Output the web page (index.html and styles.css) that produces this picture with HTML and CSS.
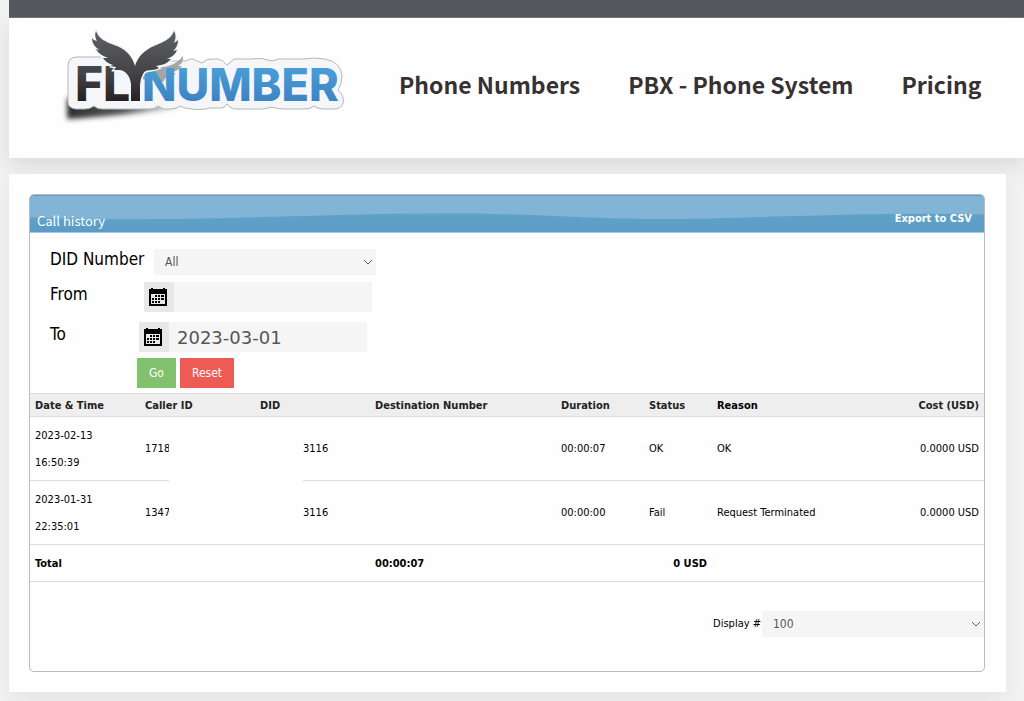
FILE: index.html
```html
<!DOCTYPE html>
<html lang="en">
<head>
    <meta charset="UTF-8">
    <meta name="viewport" content="width=device-width, initial-scale=1.0">
    <title>Call history - FlyNumber</title>
    <link rel="stylesheet" href="styles.css">
</head>
<body>
    <div class="top-bar"></div>

    <header class="header">
        <a class="logo" href="#" aria-label="FlyNumber">
            <svg width="290" height="105" viewBox="60 25 290 105">
                <defs>
                    <linearGradient id="dark" x1="0" y1="30" x2="0" y2="102" gradientUnits="userSpaceOnUse">
                        <stop offset="0" stop-color="#606164"/>
                        <stop offset="0.6" stop-color="#434345"/>
                        <stop offset="1" stop-color="#252022"/>
                    </linearGradient>
                    <linearGradient id="blue" x1="0" y1="66" x2="0" y2="102" gradientUnits="userSpaceOnUse">
                        <stop offset="0" stop-color="#4a9fd8"/>
                        <stop offset="1" stop-color="#3d82c2"/>
                    </linearGradient>
                    <linearGradient id="fade" x1="66" y1="0" x2="185" y2="0" gradientUnits="userSpaceOnUse">
                        <stop offset="0" stop-color="#2c302e"/>
                        <stop offset="0.5" stop-color="#2c302e" stop-opacity="0.8"/>
                        <stop offset="1" stop-color="#2c302e" stop-opacity="0"/>
                    </linearGradient>
                    <filter id="soft" x="-10%" y="-30%" width="120%" height="180%">
                        <feGaussianBlur stdDeviation="2.5"/>
                    </filter>
                    <path id="wings" d="M131 101V84C130 76 126 71 120 70L114 70L116 67L110 66L113 65Q106 63 103 58L108 58Q99 55 96 49L100 50Q92 46 92 38Q94 41 97 41Q94 36 96 31C99 39 106 42 114 45C124 48 132 55 135 66C138 56 145 50 154 46C164 42 171 39 174 31Q177 36 174 43L178 40Q178 47 173 51L177 50Q175 56 167 59L171 59Q167 64 161 65L156 66L159 68C152 72 146 68 143 74Q140 79 140 85V101Z"/>
                </defs>
                <path d="M67 98V119Q110 117 180 108V100Z" fill="url(#fade)" filter="url(#soft)"/>
                <path d="M77 57H110L116 67H155L163 61H186Q192 57 197 61L202 63Q207 58 213 59H218Q223 60 227 65L234 59H250Q262 57 272 61Q278 58 285 59H304Q313 57 325 59Q341 62 342 76Q342 84 338 90Q345 97 343 103Q341 109 334 109H322Q316 108 314 106Q311 109 304 109H284Q277 109 272 107Q264 110 254 109H240Q231 110 227 104Q224 109 217 108H210Q201 111 185 108L180 106Q177 109 170 109H164Q161 108 158 106Q155 109 150 109H102Q97 109 94 106Q90 109 85 109H76Q68 108 68 102V66Q68 57 77 57Z" fill="#f4f6f9" stroke="#b5b6b8"/>
                <path d="M141 79C145 70 153 67 163 67C173 66 179 61 183 56Q184 63 178 66L182 66Q178 71 172 72L176 74Q165 76 163 82Z" fill="#a4a5a6"/>
                <text class="logo-text" x="142" y="101" fill="url(#blue)">NUMBER</text>
                <text class="logo-text logo-fl" x="75" y="101" fill="url(#dark)">FL</text>
                <use href="#wings" fill="url(#dark)" stroke="#f4f6f9" stroke-width="3" paint-order="stroke"/>
            </svg>
        </a>
        <nav class="nav">
            <a href="#">Phone Numbers</a>
            <a href="#">PBX - Phone System</a>
            <a href="#">Pricing</a>
        </nav>
    </header>

    <main class="content">
        <section class="panel">
            <div class="panel-title">
                <svg class="wave" viewBox="0 0 954 37" preserveAspectRatio="none" aria-hidden="true">
                    <path d="M0 22C150 28 280 18 410 18S560 26 680 23S850 17 954 19V0H0Z"/>
                </svg>
                <h1>Call history</h1>
                <a href="#">Export to CSV</a>
            </div>

            <form class="filter">
                <div class="row row-did">
                    <label for="did">DID Number</label>
                    <select id="did"><option>All</option></select>
                </div>
                <div class="row row-from">
                    <label for="from">From</label>
                    <span class="date">
                        <svg class="calendar" viewBox="0 0 18 18" aria-hidden="true">
                            <path d="M0 1H2V0H4V1H14V0H16V1H18V18H0ZM2 6V16H16V6Z" fill-rule="evenodd"/>
                            <path d="M6 7h2v2h-2zM9 7h2v2h-2zM12 7h3v2h-3zM3 10h2v2h-2zM6 10h2v2h-2zM9 10h2v2h-2zM12 10h3v2h-3zM3 13h2v2h-2zM6 13h2v2h-2zM9 13h2v2h-2z"/>
                        </svg>
                        <input type="text" id="from">
                    </span>
                </div>
                <div class="row row-to">
                    <label for="to">To</label>
                    <span class="date">
                        <svg class="calendar" viewBox="0 0 18 18" aria-hidden="true">
                            <path d="M0 1H2V0H4V1H14V0H16V1H18V18H0ZM2 6V16H16V6Z" fill-rule="evenodd"/>
                            <path d="M6 7h2v2h-2zM9 7h2v2h-2zM12 7h3v2h-3zM3 10h2v2h-2zM6 10h2v2h-2zM9 10h2v2h-2zM12 10h3v2h-3zM3 13h2v2h-2zM6 13h2v2h-2zM9 13h2v2h-2z"/>
                        </svg>
                        <input type="text" id="to" value="2023-03-01">
                    </span>
                </div>
                <div class="actions">
                    <button type="submit" class="btn go">Go</button>
                    <button type="reset" class="btn reset">Reset</button>
                </div>
            </form>

            <div class="table-wrap">
                <table class="calls">
                    <colgroup>
                        <col class="c-date">
                        <col class="c-caller">
                        <col class="c-did">
                        <col class="c-dest">
                        <col class="c-duration">
                        <col class="c-status">
                        <col class="c-reason">
                        <col class="c-cost">
                    </colgroup>
                    <thead>
                        <tr>
                            <th>Date &amp; Time</th>
                            <th>Caller ID</th>
                            <th>DID</th>
                            <th>Destination Number</th>
                            <th>Duration</th>
                            <th>Status</th>
                            <th class="reason">Reason</th>
                            <th class="right">Cost (USD)</th>
                        </tr>
                    </thead>
                    <tbody>
                        <tr>
                            <td>2023-02-13<br>16:50:39</td>
                            <td>1718</td>
                            <td class="did">3116</td>
                            <td></td>
                            <td>00:00:07</td>
                            <td>OK</td>
                            <td>OK</td>
                            <td class="right">0.0000 USD</td>
                        </tr>
                        <tr>
                            <td>2023-01-31<br>22:35:01</td>
                            <td>1347</td>
                            <td class="did">3116</td>
                            <td></td>
                            <td>00:00:00</td>
                            <td>Fail</td>
                            <td>Request Terminated</td>
                            <td class="right">0.0000 USD</td>
                        </tr>
                    </tbody>
                    <tfoot>
                        <tr>
                            <td colspan="3">Total</td>
                            <td>00:00:07</td>
                            <td colspan="2" class="right">0 USD</td>
                            <td colspan="2"></td>
                        </tr>
                    </tfoot>
                </table>
                <div class="mask"></div>
            </div>

            <div class="pager">
                <label for="limit">Display #</label>
                <select id="limit"><option>100</option></select>
            </div>
        </section>
    </main>
</body>
</html>
```
FILE: styles.css
```css
* {
    margin: 0;
    padding: 0;
    box-sizing: border-box;
}

body {
    font-family: "DejaVu Sans Condensed", Tahoma, "DejaVu Sans", sans-serif;
    font-size: 11px;
    color: #000;
    background: #f2f2f2;
    padding-left: 9px;
}

a {
    text-decoration: none;
}

.top-bar {
    height: 18px;
    background: #55585c;
    border-bottom: 1px solid #74777a;
}

/* header */
.header {
    display: flex;
    align-items: flex-start;
    height: 140px;
    padding: 7px 0 0 51px;
    background: #fefefe;
    box-shadow: 0 8px 20px rgba(0, 0, 0, 0.1);
}

.logo svg {
    display: block;
}

.logo-text {
    font-family: Inter, sans-serif;
    font-size: 45px;
    font-weight: 800;
}

.logo-fl {
    font-size: 48px;
}

.nav {
    display: flex;
    gap: 48px;
    padding: 41px 0 0 49px;
    white-space: nowrap;
}

.nav a {
    font-family: "Noto Sans CJK SC", sans-serif;
    font-size: 23px;
    font-weight: bold;
    line-height: 36px;
    color: #373132;
}

/* content */
.content {
    position: relative;
    margin: 16px 18px 9px 0;
    padding: 20px 21px 20px 20px;
    background: #fefefe;
    box-shadow: 0 8px 20px rgba(0, 0, 0, 0.06);
}

.panel {
    border: 1px solid #bbb;
    border-radius: 5px;
    overflow: hidden;
}

.panel-title {
    position: relative;
    display: flex;
    justify-content: space-between;
    height: 38px;
    padding: 14px 12px 0 7px;
    background: linear-gradient(#67a8cc, #5a9cc5);
    border-top: 1px solid #5d9fcb;
    border-bottom: 1px solid #a5c8e6;
}

.wave {
    position: absolute;
    top: 0;
    left: 0;
    width: 100%;
    height: 100%;
    fill: #82b5d5;
}

.panel-title h1,
.panel-title a {
    position: relative;
    color: #fff;
}

.panel-title h1 {
    font-family: "Noto Sans CJK SC", sans-serif;
    font-size: 13px;
    font-weight: normal;
    line-height: 22px;
}

.panel-title a {
    font-weight: bold;
    line-height: 18px;
}

/* filter form */
.filter {
    padding: 16px 20px 5px;
}

.row {
    display: flex;
    margin-bottom: 10px;
}

.row label {
    font-size: 17px;
    line-height: 20px;
}

.row-did {
    margin-bottom: 7px;
}

.row-did label {
    width: 104px;
}

.row-from label {
    width: 94px;
    padding-top: 2px;
}

.row-to {
    margin-bottom: 6px;
}

.row-to label {
    width: 89px;
    padding-top: 2px;
}

select {
    appearance: none;
    width: 222px;
    height: 26px;
    padding: 0 11px;
    border: 0;
    border-radius: 0;
    color: #555;
    font-family: "DejaVu Sans Condensed", Tahoma, sans-serif;
    font-size: 12px;
    background: #f5f5f5 url("data:image/svg+xml,%3Csvg xmlns='http://www.w3.org/2000/svg' width='10' height='6'%3E%3Cpath d='M1 1l4 4 4-4' fill='none' stroke='%23555'/%3E%3C/svg%3E") no-repeat right 3px center;
}

.date {
    display: flex;
    width: 228px;
    height: 30px;
    background: #f5f5f5;
}

.calendar {
    width: 30px;
    height: 30px;
    padding: 6px 7px 6px 5px;
    background: #e8e8e8;
}

.date input {
    width: 198px;
    padding: 0 8px;
    border: 0;
    background: none;
    color: #555;
    font-family: "DejaVu Sans", Verdana, sans-serif;
    font-size: 18px;
}

.actions {
    display: flex;
    gap: 4px;
    padding-left: 87px;
}

.btn {
    height: 30px;
    padding: 0 12px;
    border: 0;
    color: #fff;
    font-family: "DejaVu Sans Condensed", Tahoma, sans-serif;
    font-size: 12px;
}

.go {
    background: #82c16d;
}

.reset {
    background: #ee5a54;
}

/* calls table */
.table-wrap {
    position: relative;
}

.calls {
    width: 100%;
    table-layout: fixed;
    border-collapse: collapse;
}

.c-date {
    width: 110px;
}

.c-caller,
.c-did {
    width: 115px;
}

.c-dest {
    width: 186px;
}

.c-duration {
    width: 88px;
}

.c-status {
    width: 68px;
}

.c-reason {
    width: 150px;
}

.calls th,
.calls td {
    padding: 0 5px;
    text-align: left;
    border-bottom: 1px solid #ddd;
}

.calls th {
    height: 23px;
    color: #222;
    background: #eee;
    border-top: 1px solid #ddd;
}

.calls th.reason {
    color: #000;
}

.calls td {
    height: 64px;
    line-height: 27px;
}

.calls td.did {
    padding-left: 48px;
}

.calls tfoot td {
    height: 37px;
    font-weight: bold;
}

.calls .right {
    text-align: right;
}

.mask {
    position: absolute;
    top: 28px;
    left: 139px;
    width: 134px;
    height: 120px;
    background: #fefefe;
}

.pager {
    display: flex;
    justify-content: flex-end;
    padding: 29px 0 34px;
}

.pager label {
    line-height: 25px;
    margin-right: 1px;
}
```
